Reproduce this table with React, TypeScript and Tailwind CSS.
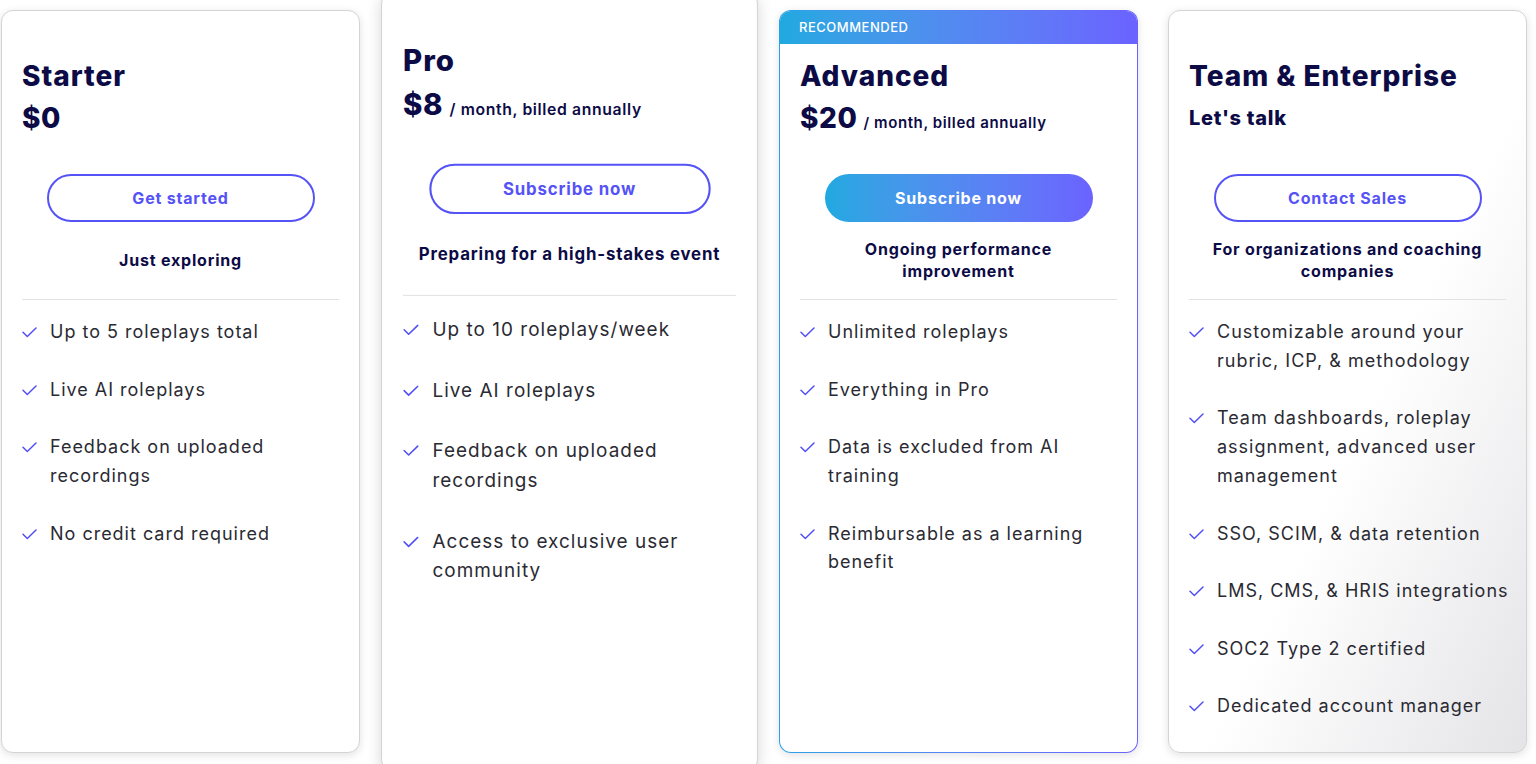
type Plan = {
  name: string;
  price: string;
  suffix?: string;
  cta: string;
  tagline: string;
  features: string[];
  recommended?: boolean;
  hovered?: boolean;
  enterprise?: boolean;
};

const plans: Plan[] = [
  {
    name: "Starter",
    price: "$0",
    cta: "Get started",
    tagline: "Just exploring",
    features: [
      "Up to 5 roleplays total",
      "Live AI roleplays",
      "Feedback on uploaded recordings",
      "No credit card required",
    ],
  },
  {
    name: "Pro",
    price: "$8",
    suffix: "/ month, billed annually",
    cta: "Subscribe now",
    tagline: "Preparing for a high-stakes event",
    hovered: true,
    features: [
      "Up to 10 roleplays/week",
      "Live AI roleplays",
      "Feedback on uploaded recordings",
      "Access to exclusive user community",
    ],
  },
  {
    name: "Advanced",
    price: "$20",
    suffix: "/ month, billed annually",
    cta: "Subscribe now",
    tagline: "Ongoing performance improvement",
    recommended: true,
    features: [
      "Unlimited roleplays",
      "Everything in Pro",
      "Data is excluded from AI training",
      "Reimbursable as a learning benefit",
    ],
  },
  {
    name: "Team & Enterprise",
    price: "Let's talk",
    cta: "Contact Sales",
    tagline: "For organizations and coaching companies",
    enterprise: true,
    features: [
      "Customizable around your rubric, ICP, & methodology",
      "Team dashboards, roleplay assignment, advanced user management",
      "SSO, SCIM, & data retention",
      "LMS, CMS, & HRIS integrations",
      "SOC2 Type 2 certified",
      "Dedicated account manager",
    ],
  },
];

function Tick() {
  return (
    <svg width="15" height="11" viewBox="0 0 15 11" fill="none" className="mt-[9px] shrink-0">
      <path d="M1 5.2 5.3 9.5 14 1" stroke="#524ff3" strokeWidth="1.5" strokeLinecap="round" strokeLinejoin="round" />
    </svg>
  );
}

function CardBody({ plan }: { plan: Plan }) {
  return (
    <div className="flex h-full flex-col">
      {/* top strip, only filled on the recommended plan */}
      {plan.recommended ? (
        <div className="flex h-[33px] items-center bg-gradient-to-r from-[#1fa9e1] to-[#6b62ff] px-[19px] text-[13px] font-medium uppercase tracking-[0.04em] text-white">
          Recommended
        </div>
      ) : (
        <div className="h-[33px]" />
      )}

      <div className="flex flex-1 flex-col px-5 pt-[11px]">
        <h2 className="text-[28px] font-extrabold leading-[42px] tracking-[0.035em] text-[#0c0b46]">{plan.name}</h2>
        <div className="flex items-baseline gap-[6px] text-[#0c0b46]">
          {plan.enterprise ? (
            <span className="text-[20px] font-extrabold leading-[42px] tracking-[0.035em]">{plan.price}</span>
          ) : (
            <span className="text-[28px] font-extrabold leading-[42px] tracking-[0.02em]">{plan.price}</span>
          )}
          {plan.suffix && <span className="text-[15px] font-semibold tracking-[0.04em]">{plan.suffix}</span>}
        </div>

        <div className="mt-[35px] flex justify-center">
          {plan.recommended ? (
            <button className="h-12 w-[268px] rounded-full bg-gradient-to-r from-[#1fa9e1] to-[#6b62ff] text-[16px] font-bold tracking-[0.05em] text-white">
              {plan.cta}
            </button>
          ) : (
            <button className="h-12 w-[268px] rounded-full border-2 border-[#5653f6] bg-white text-[16px] font-bold tracking-[0.05em] text-[#5653f6]">
              {plan.cta}
            </button>
          )}
        </div>

        <div className="mx-auto flex h-[76px] w-[296px] items-center justify-center text-center text-[16px] font-bold leading-[22px] tracking-[0.05em] text-[#0c0b46]">
          {plan.tagline}
        </div>

        <div className="mt-px border-t border-[#e2e2e6]" />

        <ul className="mr-[-7px] flex flex-col gap-[28.8px] pt-[18px]">
          {plan.features.map((f) => (
            <li key={f} className="flex items-start gap-[13px]">
              <Tick />
              <span className="text-[18px] leading-[28.8px] tracking-[0.055em] text-[#2a2a33]">{f}</span>
            </li>
          ))}
        </ul>
      </div>
    </div>
  );
}

function PlanCard({ plan }: { plan: Plan }) {
  if (plan.recommended) {
    return (
      <div className="h-[743px] w-[359px] shrink-0 rounded-xl bg-gradient-to-r from-[#2aa0e8] to-[#6b62ff] p-px shadow-[0_2px_8px_rgba(0,0,0,0.12)]">
        <div className="h-full overflow-hidden rounded-[11px] bg-white">
          <CardBody plan={plan} />
        </div>
      </div>
    );
  }

  return (
    <div
      className={
        plan.hovered
          ? "relative z-10 h-[743px] w-[359px] shrink-0 scale-105 overflow-hidden rounded-xl border border-[#d4d4d8] bg-white shadow-[0_4px_14px_rgba(0,0,0,0.16)]"
          : plan.enterprise
            ? "h-[743px] w-[359px] shrink-0 overflow-hidden rounded-xl border border-[#d4d4d8] bg-gradient-to-br from-white from-55% to-[#e4e4e7] shadow-[0_2px_8px_rgba(0,0,0,0.12)]"
            : "h-[743px] w-[359px] shrink-0 overflow-hidden rounded-xl border border-[#d4d4d8] bg-white shadow-[0_2px_8px_rgba(0,0,0,0.12)]"
      }
    >
      <CardBody plan={plan} />
    </div>
  );
}

export default function App() {
  return (
    <div
      className="h-[764px] w-full overflow-hidden bg-white"
      style={{ fontFamily: "Inter, 'Noto Sans', sans-serif" }}
    >
      <div className="flex gap-[30px] pl-px pt-[10px]">
        {plans.map((p) => (
          <PlanCard key={p.name} plan={p} />
        ))}
      </div>
    </div>
  );
}
